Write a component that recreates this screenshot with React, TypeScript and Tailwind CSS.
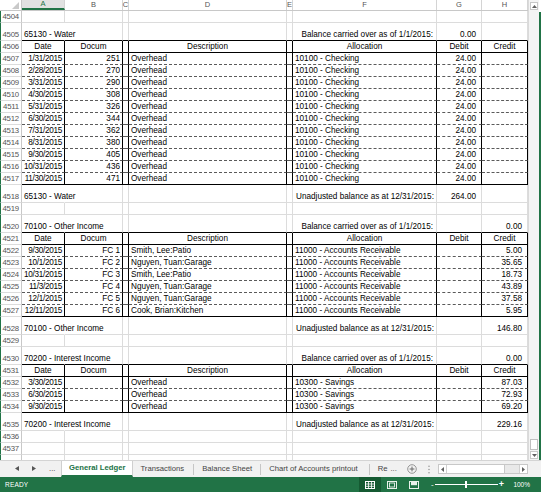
import React from 'react';

type Col = 'A' | 'B' | 'C' | 'D' | 'E' | 'F' | 'G' | 'H';
type Kind = 'blank' | 'title' | 'head' | 'data';
type Bottom = 'grid' | 'black' | 'dash';

interface RowDef {
  n: number;
  tall?: boolean;
  kind: Kind;
  bottom: Bottom;
  cells?: Partial<Record<Col, string>>;
  fRight?: boolean;
  hideNum?: boolean;
}

const COLS: { k: Col; w: string }[] = [
  { k: 'A', w: 'w-[43px]' },
  { k: 'B', w: 'w-[58px]' },
  { k: 'C', w: 'w-[6px]' },
  { k: 'D', w: 'w-[158px]' },
  { k: 'E', w: 'w-[6px]' },
  { k: 'F', w: 'w-[144px]' },
  { k: 'G', w: 'w-[45px]' },
  { k: 'H', w: 'w-[46px]' },
];

const HEAD = { A: 'Date', B: 'Docum', D: 'Description', F: 'Allocation', G: 'Debit', H: 'Credit' };

const waterRows: [string, string][] = [
  ['1/31/2015', '251'],
  ['2/28/2015', '270'],
  ['3/31/2015', '290'],
  ['4/30/2015', '308'],
  ['5/31/2015', '326'],
  ['6/30/2015', '344'],
  ['7/31/2015', '362'],
  ['8/31/2015', '380'],
  ['9/30/2015', '405'],
  ['10/31/2015', '436'],
  ['11/30/2015', '471'],
];

const incomeRows: [string, string, string, string][] = [
  ['9/30/2015', 'FC 1', 'Smith, Lee:Patio', '5.00'],
  ['10/1/2015', 'FC 2', 'Nguyen, Tuan:Garage', '35.65'],
  ['10/31/2015', 'FC 3', 'Smith, Lee:Patio', '18.73'],
  ['11/3/2015', 'FC 4', 'Nguyen, Tuan:Garage', '43.89'],
  ['12/1/2015', 'FC 5', 'Nguyen, Tuan:Garage', '37.58'],
  ['12/11/2015', 'FC 6', 'Cook, Brian:Kitchen', '5.95'],
];

const interestRows: [string, string][] = [
  ['3/30/2015', '87.03'],
  ['6/30/2015', '72.93'],
  ['9/30/2015', '69.20'],
];

const BAL = 'Balance carried over as of 1/1/2015:';
const UNADJ = 'Unadjusted balance as at 12/31/2015:';

function buildRows(): RowDef[] {
  const rows: RowDef[] = [];
  let n = 4504;
  rows.push({ n: n++, kind: 'blank', bottom: 'grid' });
  rows.push({ n: n++, tall: true, kind: 'title', bottom: 'black', fRight: true, cells: { A: '65130 - Water', F: BAL, G: '0.00' } });
  rows.push({ n: n++, kind: 'head', bottom: 'black', cells: HEAD });
  waterRows.forEach(([d, doc], i) => {
    rows.push({
      n: n++,
      kind: 'data',
      bottom: i === waterRows.length - 1 ? 'black' : 'dash',
      cells: { A: d, B: doc, D: 'Overhead', F: '10100 - Checking', G: '24.00' },
    });
  });
  rows.push({ n: n++, tall: true, kind: 'title', bottom: 'grid', cells: { A: '65130 - Water', F: UNADJ, G: '264.00' } });
  rows.push({ n: n++, kind: 'blank', bottom: 'grid' });
  rows.push({ n: n++, tall: true, kind: 'title', bottom: 'black', fRight: true, cells: { A: '70100 - Other Income', F: BAL, H: '0.00' } });
  rows.push({ n: n++, kind: 'head', bottom: 'black', cells: HEAD });
  incomeRows.forEach(([d, doc, desc, cr], i) => {
    rows.push({
      n: n++,
      kind: 'data',
      bottom: i === incomeRows.length - 1 ? 'black' : 'dash',
      cells: { A: d, B: doc, D: desc, F: '11000 - Accounts Receivable', H: cr },
    });
  });
  rows.push({ n: n++, tall: true, kind: 'title', bottom: 'grid', cells: { A: '70100 - Other Income', F: UNADJ, H: '146.80' } });
  rows.push({ n: n++, kind: 'blank', bottom: 'grid' });
  rows.push({ n: n++, tall: true, kind: 'title', bottom: 'black', fRight: true, cells: { A: '70200 - Interest Income', F: BAL, H: '0.00' } });
  rows.push({ n: n++, kind: 'head', bottom: 'black', cells: HEAD });
  interestRows.forEach(([d, cr], i) => {
    rows.push({
      n: n++,
      kind: 'data',
      bottom: i === interestRows.length - 1 ? 'black' : 'dash',
      cells: { A: d, D: 'Overhead', F: '10300 - Savings', H: cr },
    });
  });
  rows.push({ n: n++, tall: true, kind: 'title', bottom: 'grid', cells: { A: '70200 - Interest Income', F: UNADJ, H: '229.16' } });
  rows.push({ n: n++, kind: 'blank', bottom: 'grid' });
  rows.push({ n: n++, kind: 'blank', bottom: 'grid' });
  // 4538 sits mostly under the sheet tabs
  rows.push({ n: n++, kind: 'blank', bottom: 'grid', hideNum: true });
  return rows;
}

function alignFor(kind: Kind, col: Col, fRight?: boolean): string {
  if (kind === 'head') return 'justify-center';
  if (kind === 'title') {
    if (col === 'A') return 'justify-start pl-[2px] overflow-visible';
    if (col === 'F') return fRight ? 'justify-end pr-[3px]' : 'justify-start pl-[3px]';
    return 'justify-end pr-[5px]';
  }
  if (col === 'A') return 'justify-end pr-[2px] tracking-[-0.3px] overflow-hidden';
  if (col === 'B') return 'justify-end pr-[2px]';
  if (col === 'G' || col === 'H') return 'justify-end pr-[5px]';
  return 'justify-start pl-[2px]';
}

function SheetRow({ r }: { r: RowDef }) {
  const table = r.kind === 'head' || r.kind === 'data';
  const bottom =
    r.bottom === 'black'
      ? 'border-b border-b-black'
      : r.bottom === 'dash'
        ? 'border-b border-b-[#5a5a5a] [border-bottom-style:dashed]'
        : 'border-b border-b-[#dcdcdc]';
  return (
    <div className={`flex shrink-0 ${r.tall ? 'h-[18px]' : 'h-[12px]'}`}>
      <div className="w-[22px] shrink-0 flex items-end justify-end pr-[2px] border-l border-l-[#217346] border-r border-r-[#c8c8c8] border-b border-b-[#dcdcdc] text-[7.8px] leading-[11px] text-[#555] tracking-[-0.2px]">
        {r.hideNum ? null : r.n}
      </div>
      {COLS.map(({ k, w }) => {
        const right = table
          ? 'border-r border-r-black'
          : r.kind === 'title' && k === 'A'
            ? 'border-r border-r-transparent'
            : 'border-r border-r-[#dcdcdc]';
        const text = r.cells?.[k];
        return (
          <div
            key={k}
            className={`${w} shrink-0 flex items-end whitespace-nowrap text-[8.2px] leading-[11px] text-black ${right} ${bottom} ${alignFor(r.kind, k, r.fRight)}`}
          >
            {text}
          </div>
        );
      })}
    </div>
  );
}

function ColumnHeader() {
  return (
    <div className="flex h-[11px] shrink-0 border-b border-b-[#c8c8c8] bg-white">
      <div className="w-[22px] shrink-0 border-r border-r-[#c8c8c8] flex items-end justify-end pr-[2px] pb-[1px]">
        <svg width="7" height="7" viewBox="0 0 7 7">
          <polygon points="7,0 7,7 0,7" fill="#c9c9c9" />
        </svg>
      </div>
      {COLS.map(({ k, w }) => (
        <div
          key={k}
          className={`${w} shrink-0 flex items-center justify-center border-r border-r-[#d4d4d4] text-[7.5px] leading-none ${
            k === 'A' ? 'bg-[#e1e1e1] text-[#217346] border-b-2 border-b-[#217346]' : 'text-[#555]'
          }`}
        >
          {k}
        </div>
      ))}
    </div>
  );
}

function VScroll() {
  return (
    <div className="w-[11px] shrink-0 flex flex-col bg-[#f4f4f4] border-l border-l-[#dadada] px-[1px] pt-[2px]">
      <div className="h-[8px] bg-white border border-[#c8c8c8] flex items-center justify-center">
        <svg width="5" height="3" viewBox="0 0 5 3">
          <polygon points="2.5,0 5,3 0,3" fill="#606060" />
        </svg>
      </div>
      <div className="flex-1" />
      <div className="h-[11px] bg-white border border-[#c0c0c0]" />
      <div className="h-[8px] mt-[1px] mb-[1px] bg-white border border-[#c8c8c8] flex items-center justify-center">
        <svg width="5" height="3" viewBox="0 0 5 3">
          <polygon points="0,0 5,0 2.5,3" fill="#606060" />
        </svg>
      </div>
    </div>
  );
}

function Sep() {
  return <div className="w-px h-[11px] bg-[#c6c6c6] shrink-0" />;
}

function TabBar() {
  return (
    <div className="h-[17px] shrink-0 flex bg-[#f1f1f1] border-t border-t-[#d4d4d4] text-[7.7px] text-[#444] whitespace-nowrap">
      <div className="flex flex-1 min-w-0 overflow-hidden items-center">
        <div className="w-[61px] shrink-0 flex items-center pl-[15px] gap-[13px]">
          <svg width="4" height="5" viewBox="0 0 4 5">
            <polygon points="4,0 4,5 0,2.5" fill="#555" />
          </svg>
          <svg width="4" height="5" viewBox="0 0 4 5">
            <polygon points="0,0 0,5 4,2.5" fill="#555" />
          </svg>
          <span className="text-[#333]">...</span>
        </div>
        <div className="self-stretch -mt-px flex items-center px-[7px] bg-white border-x border-x-[#cfcfcf] border-b-2 border-b-[#217346] text-[#217346] font-bold">
          General Ledger
        </div>
        <span className="pl-[7px] pr-[9px]">Transactions</span>
        <Sep />
        <span className="px-[8px]">Balance Sheet</span>
        <Sep />
        <span className="pl-[8px] pr-[11px]">Chart of Accounts printout</span>
        <Sep />
        <span className="pl-[8px]">Re</span>
        <span className="pl-[3px]">...</span>
      </div>
      <div className="w-[134px] shrink-0 flex items-center">
        <svg width="10" height="10" viewBox="0 0 10 10">
          <circle cx="5" cy="5" r="4.3" fill="none" stroke="#8a8a8a" strokeWidth="0.9" />
          <path d="M5 2.6V7.4M2.6 5H7.4" stroke="#6a6a6a" strokeWidth="1" />
        </svg>
        <svg className="ml-[11px]" width="2" height="9" viewBox="0 0 2 9">
          <circle cx="1" cy="1.2" r="0.7" fill="#8a8a8a" />
          <circle cx="1" cy="4.5" r="0.7" fill="#8a8a8a" />
          <circle cx="1" cy="7.8" r="0.7" fill="#8a8a8a" />
        </svg>
        <div className="ml-[8px] w-[90px] h-[10px] flex border border-[#c8c8c8] bg-[#e9e9e9]">
          <div className="w-[8px] bg-white border-r border-r-[#d0d0d0] flex items-center justify-center">
            <svg width="3" height="5" viewBox="0 0 3 5">
              <polygon points="3,0 3,5 0,2.5" fill="#606060" />
            </svg>
          </div>
          <div className="w-[58px] bg-white border-r border-r-[#c8c8c8]" />
          <div className="flex-1" />
          <div className="w-[8px] bg-white border-l border-l-[#d0d0d0] flex items-center justify-center">
            <svg width="3" height="5" viewBox="0 0 3 5">
              <polygon points="0,0 0,5 3,2.5" fill="#606060" />
            </svg>
          </div>
        </div>
      </div>
    </div>
  );
}

function StatusBar() {
  return (
    <div className="h-[15px] shrink-0 flex items-stretch bg-[#217346] text-white">
      <div className="flex items-center pl-[5px] text-[6.5px] tracking-[0.2px]">READY</div>
      <div className="ml-auto flex items-stretch">
        <div className="w-[22px] bg-[#155a32] flex items-center justify-center">
          <svg width="10" height="8" viewBox="0 0 10 8">
            <rect x="0.5" y="0.5" width="9" height="7" fill="none" stroke="#fff" strokeWidth="1" />
            <path d="M3.5 0.5V7.5M6.5 0.5V7.5M0.5 3H9.5M0.5 5.3H9.5" stroke="#fff" strokeWidth="0.8" />
          </svg>
        </div>
        <div className="w-[22px] flex items-center justify-center">
          <svg width="10" height="8" viewBox="0 0 10 8">
            <rect x="0.5" y="0.5" width="9" height="7" fill="none" stroke="#e8f0ea" strokeWidth="1" />
            <rect x="2.5" y="2" width="5" height="4" fill="none" stroke="#e8f0ea" strokeWidth="0.9" />
          </svg>
        </div>
        <div className="w-[22px] flex items-center justify-center">
          <svg width="10" height="8" viewBox="0 0 10 8">
            <rect x="0.5" y="0.5" width="9" height="7" fill="none" stroke="#e8f0ea" strokeWidth="1" />
            <rect x="2" y="1" width="6" height="3.2" fill="#e8f0ea" />
          </svg>
        </div>
        <div className="ml-[4px] w-[6px] flex items-center justify-center text-[8px] leading-none">-</div>
        <div className="w-[63px] relative flex items-center">
          <div className="w-full h-px bg-white" />
          <div className="absolute left-[30px] top-[4px] w-[2px] h-[7px] bg-white" />
        </div>
        <div className="w-[6px] flex items-center justify-center text-[9px] leading-none font-bold">+</div>
        <div className="ml-[9px] pr-[11px] flex items-center text-[6.5px]">100%</div>
      </div>
    </div>
  );
}

export default function App() {
  const rows = buildRows();
  return (
    <div className="w-[541px] h-[492px] overflow-hidden bg-white flex flex-col font-['Liberation_Sans',Arial,sans-serif]">
      <div className="flex h-[460px] shrink-0">
        <div className="w-[528px] shrink-0 flex flex-col overflow-hidden">
          <ColumnHeader />
          {rows.map((r) => (
            <SheetRow key={r.n} r={r} />
          ))}
        </div>
        <VScroll />
        <div className="w-[2px] shrink-0 flex flex-col">
          <div className="h-[12px]" />
          <div className="flex-1 bg-[#217346]" />
        </div>
      </div>
      <TabBar />
      <StatusBar />
    </div>
  );
}
